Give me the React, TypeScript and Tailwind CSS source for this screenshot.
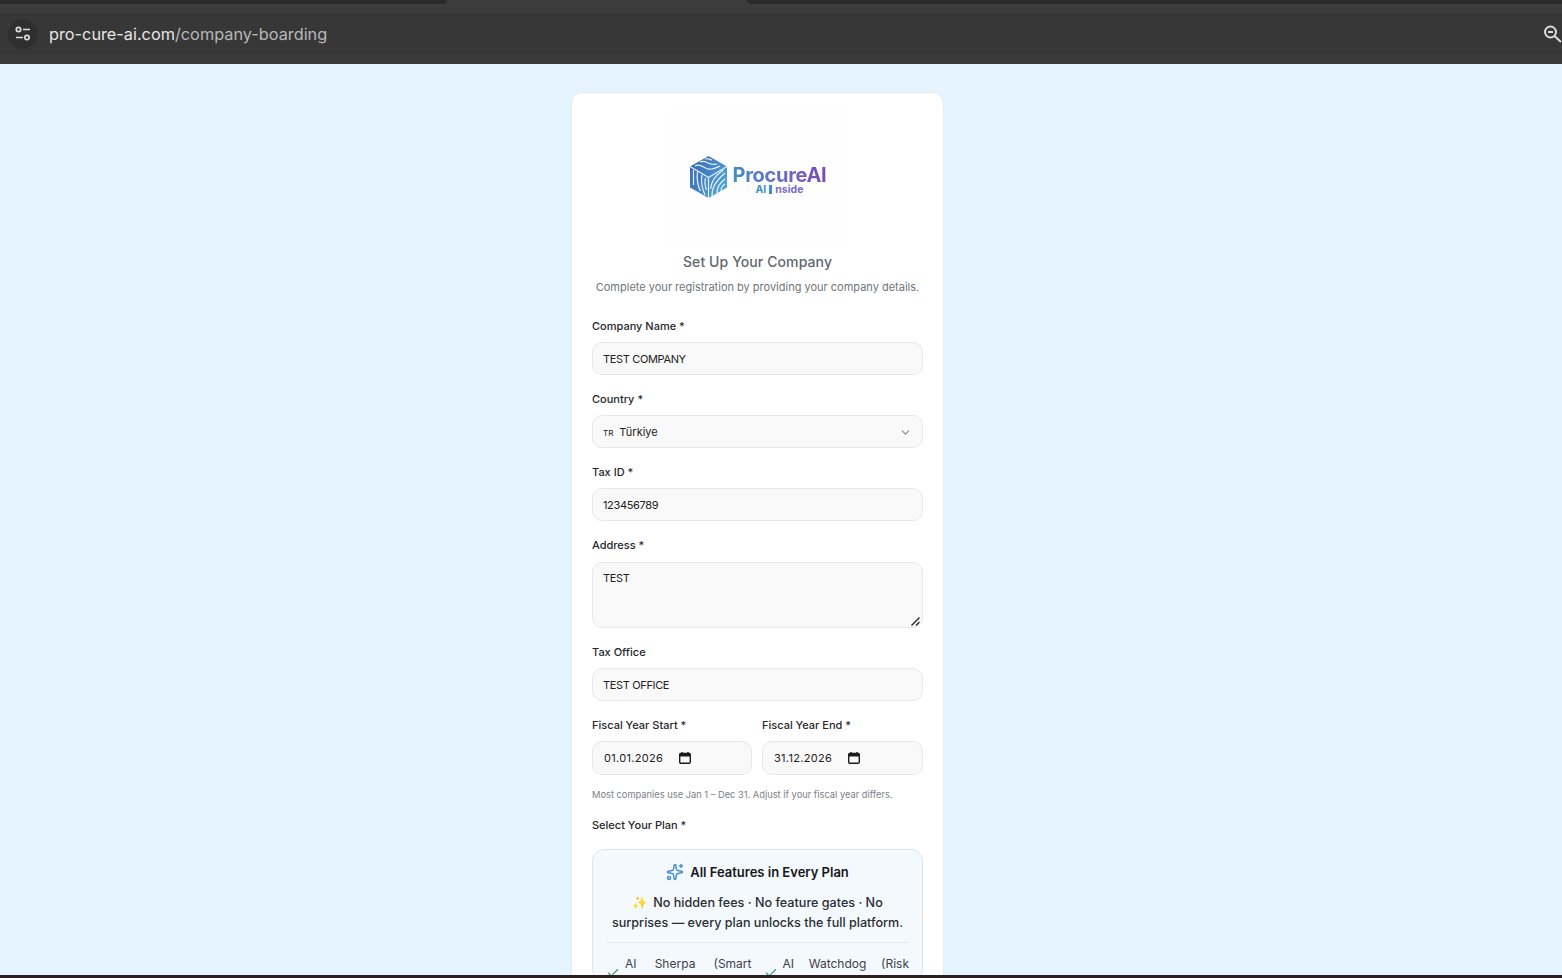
import { ChevronDown, Sparkles, Check } from "lucide-react";
import type { ReactNode } from "react";

const FIELD = "flex items-center rounded-[10px] border border-[#e8e8ea] bg-[#f9f9f9] text-[11px] text-[#222]";

function Label({ children }: { children: ReactNode }) {
  return <p className="text-[11px] leading-[15px] font-medium text-[#26272b]">{children}</p>;
}

function TextField({ label, value }: { label: string; value: string }) {
  return (
    <div>
      <Label>{label}</Label>
      <div className={`${FIELD} mt-[8px] h-[33px] pl-[10px] pt-[1px] tracking-[-0.35px]`}>{value}</div>
    </div>
  );
}

function CalendarGlyph() {
  return (
    <svg width="12" height="12" viewBox="0 0 12 12" fill="none" className="ml-[16px]">
      <path d="M3 0v2M9 0v2" stroke="#1c1c1c" strokeWidth="1.4" />
      <rect x="0.7" y="1.5" width="10.6" height="9.8" rx="1.2" stroke="#1c1c1c" strokeWidth="1.4" />
      <rect x="0.7" y="1.5" width="10.6" height="3" fill="#1c1c1c" />
    </svg>
  );
}

function DateField({ label, value, className }: { label: string; value: string; className: string }) {
  return (
    <div className={className}>
      <Label>{label}</Label>
      <div className={`${FIELD} mt-[8px] h-[34px] pl-[11px] text-xs tracking-[0.3px]`}>
        {value}
        <CalendarGlyph />
      </div>
    </div>
  );
}

function CubeLogo() {
  return (
    <svg width="39" height="44" viewBox="0 0 39 44" fill="none">
      <defs>
        <linearGradient id="cube" x1="0" y1="0" x2="1" y2="0.6">
          <stop offset="0" stopColor="#3a62b4" />
          <stop offset="1" stopColor="#4fa2d6" />
        </linearGradient>
      </defs>
      <path d="M19.5 1 38 11.5v21L19.5 43 1 32.5v-21Z" fill="url(#cube)" />
      <path d="M19.5 22.5 38 11.5M19.5 22.5 1 11.5M19.5 22.5V43" stroke="#e8f3fb" strokeWidth="1.2" />
      <path d="M6 11c5-3 9 2 13 3s8-1 12-3M11 7c4-2 7 1 11 2s4 0 6 0M16 4c3-1 5 1 7 1" stroke="#e8f3fb" strokeWidth="1.2" />
      <path d="M23 41c0-9 3-14 13-23M28 38c0-6 2-9 8-14M21.500 34c1-8 4-13 13-19M32 36c0-3 1-5 4-7" stroke="#e8f3fb" strokeWidth="1.2" />
      <path d="M4.500 15v15M8.500 17c-1 7 0 13 3 19M13 20c-1.500 7 0 13 3 20M16.500 23c-1 4-.5 8 1 12" stroke="#e8f3fb" strokeWidth="1.2" />
    </svg>
  );
}

function Logo() {
  return (
    <div className="mx-auto flex h-[134px] w-[178px] items-center justify-center bg-[#fefefe]">
      <CubeLogo />
      <div className="ml-[5px] mt-[7px] flex flex-col items-center">
        <span className="bg-gradient-to-r from-[#3f8fc4] to-[#7a49b4] bg-clip-text text-[20px] leading-[18px] font-bold tracking-[-0.3px] text-transparent">
          ProcureAI
        </span>
        <span className="flex items-center text-[10.500px] leading-[11px] font-bold text-[#7a6cc8]">
          <span className="text-[#3f8fc4]">AI</span>
          <span className="mx-[3px] h-[9px] w-[3px] bg-[#3f8fc4]" />
          nside
        </span>
      </div>
    </div>
  );
}

function BrowserBar() {
  return (
    <header className="flex h-16 shrink-0 flex-col bg-[#373737]">
      <div className="flex h-[4px] shrink-0 bg-[#3c3c3c]">
        <div className="w-[447px] rounded-br-[6px] bg-[#2a2a2a]" />
        <div className="flex-1" />
        <div className="w-[815px] rounded-bl-[6px] bg-[#2a2a2a]" />
      </div>
      <div className="h-[9px] shrink-0 bg-[#3c3c3c]" />
      <div className="flex h-[42px] shrink-0 items-center justify-between pl-[8px]">
        <div className="flex items-center">
          <div className="flex h-[30px] w-[30px] items-center justify-center rounded-full bg-[#2f2f2f]">
            <svg width="18" height="16" viewBox="0 0 18 16" fill="none" stroke="#dcdcdc" strokeWidth="1.7">
              <circle cx="4.500" cy="3.500" r="2.200" />
              <path d="M9 3.500h7M2 11.500h7" />
              <circle cx="13" cy="11.500" r="2.200" />
            </svg>
          </div>
          <p className="ml-[11px] text-[16.300px] text-[#e6e6e6]">
            pro-cure-ai.com<span className="text-[#b8b8b8]">/company-boarding</span>
          </p>
        </div>
        <svg width="19" height="18" viewBox="0 0 19 18" fill="none" stroke="#dcdcdc" strokeWidth="2">
          <circle cx="7.500" cy="7" r="5.500" />
          <path d="M5 7h5" />
          <path d="M11.500 11 18 17" />
        </svg>
      </div>
      <div className="flex-1 bg-[#3a3a3a]" />
    </header>
  );
}

export default function App() {
  return (
    <div className="flex h-[978px] w-[1562px] flex-col overflow-hidden bg-[#e5f4ff] font-['Inter',sans-serif]">
      <BrowserBar />
      <main className="min-h-0 flex-1 overflow-hidden pt-[28px]">
        <section className="ml-[571px] h-[1400px] w-[373px] rounded-t-[12px] border border-[#e6ebef] bg-white px-[20px] pt-[17px]">
          <Logo />
          <h1 className="mt-[8px] text-center text-sm leading-[20px] font-medium tracking-[0.1px] text-[#62666e]">
            Set Up Your Company
          </h1>
          <p className="mt-[7px] text-center text-[11px] leading-[16px] text-[#71757d]">
            Complete your registration by providing your company details.
          </p>

          <div className="mt-[24px] flex flex-col gap-[17px]">
            <TextField label="Company Name *" value="TEST COMPANY" />
            <div>
              <Label>Country *</Label>
              <div className={`${FIELD} mt-[8px] h-[33px] justify-between pl-[10px] pr-[10px] pt-[1px]`}>
                <span>
                  <span className="mr-[6px] text-[8px]">TR</span>Türkiye
                </span>
                <ChevronDown size={13} className="text-[#888]" />
              </div>
            </div>
            <TextField label="Tax ID *" value="123456789" />
            <div>
              <Label>Address *</Label>
              <div className="relative mt-[9px] h-[66px] rounded-[10px] border border-[#e8e8ea] bg-[#f9f9f9] pl-[10px] pt-[7px] text-[11px] tracking-[-0.35px] text-[#222]">
                TEST
                <svg className="absolute right-[2px] bottom-[1px]" width="9" height="9" viewBox="0 0 9 9" stroke="#222" strokeWidth="1.300">
                  <path d="M0.500 8.500 8.500 0.500M5 8.500l3.500-3.500" />
                </svg>
              </div>
            </div>
            <TextField label="Tax Office" value="TEST OFFICE" />
            <div className="flex gap-[10px]">
              <DateField className="w-[160px]" label="Fiscal Year Start *" value="01.01.2026" />
              <DateField className="flex-1" label="Fiscal Year End *" value="31.12.2026" />
            </div>
          </div>

          <p className="mt-[13px] text-[9.300px] leading-[14px] text-[#7c8087]">
            Most companies use Jan 1 – Dec 31. Adjust if your fiscal year differs.
          </p>

          <div className="mt-[16px]">
            <Label>Select Your Plan *</Label>
            <div className="mt-[16px] rounded-[12px] border border-[#d5e5f3] bg-[#f4f9fe] px-[13px] pt-[12px]">
              <div className="flex items-center justify-center gap-[6px]">
                <Sparkles size={18} className="text-[#4a8fd8]" />
                <span className="text-[13px] leading-[20px] font-semibold text-[#15171b]">All Features in Every Plan</span>
              </div>
              <p className="mt-[11px] text-center text-[12.600px] leading-[20px] font-medium text-[#2b2e33]">
                <span className="mr-[5px]">✨</span>No hidden fees · No feature gates · No
                <br />
                surprises — every plan unlocks the full platform.
              </p>
              <div className="mt-[9px] grid grid-cols-2 gap-x-[12px] border-t border-[#e2ebf3] pt-[12px] text-xs leading-[18px] text-[#3d4148]">
                <div className="flex">
                  <Check size={14} className="mt-[11px] mr-[5px] shrink-0 text-[#3f9d6a]" />
                  <span className="flex flex-1 justify-between">
                    <span>AI</span>
                    <span>Sherpa</span>
                    <span>(Smart</span>
                  </span>
                </div>
                <div className="flex">
                  <Check size={14} className="mt-[11px] mr-[5px] shrink-0 text-[#3f9d6a]" />
                  <span className="flex flex-1 justify-between">
                    <span>AI</span>
                    <span>Watchdog</span>
                    <span>(Risk</span>
                  </span>
                </div>
              </div>
            </div>
          </div>
        </section>
      </main>
      <div className="h-[3px] shrink-0 bg-[#2a2022]" />
    </div>
  );
}
